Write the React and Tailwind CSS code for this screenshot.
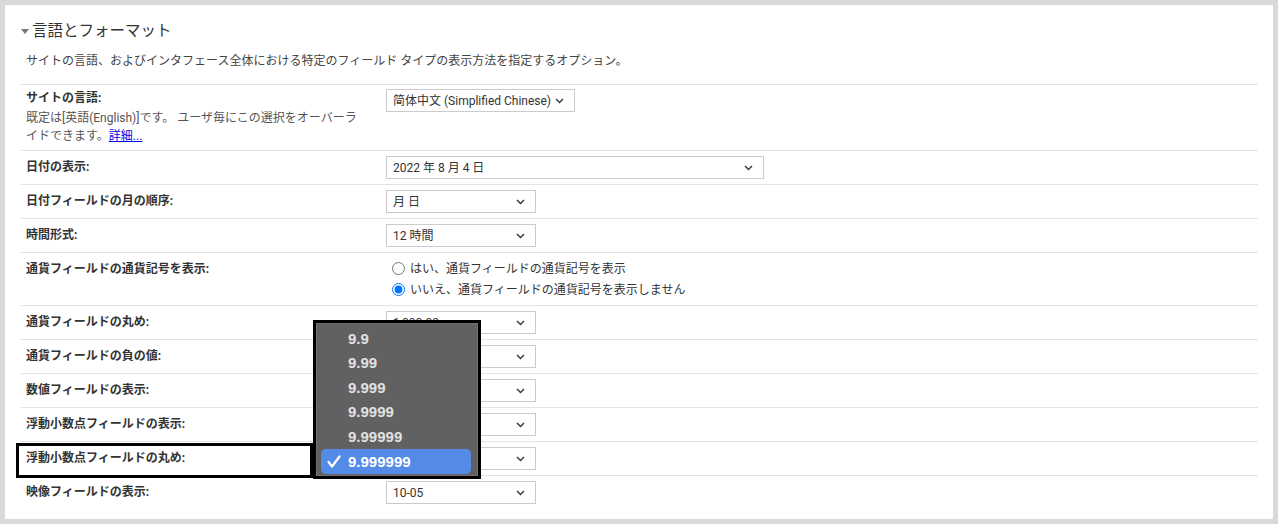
import React from "react";

const Chevron = () => (
  <svg width="9" height="6" viewBox="0 0 9 6" className="shrink-0">
    <path d="M1 1l3.5 3.5L8 1" fill="none" stroke="#3a3a3a" strokeWidth="1.5" />
  </svg>
);

function FakeSelect({ value, width, auto }) {
  return (
    <div
      className={`flex h-[23px] items-center border border-[#cbcbcb] bg-white pl-[6px] pr-[10px] text-[12px] text-[#333] ${
        auto ? "gap-[4px]" : "justify-between"
      }`}
      style={auto ? undefined : { width }}
    >
      <span className="whitespace-nowrap">{value}</span>
      <Chevron />
    </div>
  );
}

function Row({ label, children }) {
  return (
    <div className="flex border-t border-[#e3e3e3] py-[5px] pl-[5px]">
      <div className="w-[360px] shrink-0 text-[12px] font-bold leading-[23px] text-[#333]">{label}</div>
      <div>{children}</div>
    </div>
  );
}

const rows = [
  { label: "日付の表示:", value: "2022 年 8 月 4 日", width: 378 },
  { label: "日付フィールドの月の順序:", value: "月 日", width: 150 },
  { label: "時間形式:", value: "12 時間", width: 150 },
];

const rows2 = [
  { label: "通貨フィールドの丸め:", value: "1,000.00" },
  { label: "通貨フィールドの負の値:", value: "-1,000.00" },
  { label: "数値フィールドの表示:", value: "1,000.00" },
  { label: "浮動小数点フィールドの表示:", value: "1,000.00" },
  { label: "浮動小数点フィールドの丸め:", value: "9.999999" },
  { label: "映像フィールドの表示:", value: "10-05" },
];

const options = ["9.9", "9.99", "9.999", "9.9999", "9.99999", "9.999999"];

export default function App() {
  return (
    <div
      className="relative h-[524px] w-[1278px] overflow-hidden bg-[#d9d9d9] p-[5px] text-[#333]"
      style={{ fontFamily: 'Roboto, "Noto Sans CJK JP", sans-serif' }}
    >
      <div className="h-full bg-white pl-[15px] pr-[15px] pt-[14px]">
        {/* Heading */}
        <div className="flex h-[24px] items-center gap-[3px] pl-[1px]">
          <svg width="8" height="5" viewBox="0 0 8 5" className="mt-[1px]">
            <path d="M0 0h8L4 5z" fill="#777" />
          </svg>
          <h2 className="text-[15.5px] leading-[24px] text-[#333]">言語とフォーマット</h2>
        </div>
        <p className="mt-[9px] pl-[6px] text-[12px] leading-[18px] text-[#444]">
          サイトの言語、およびインタフェース全体における特定のフィールド タイプの表示方法を指定するオプション。
        </p>

        <div className="ml-[1px] mt-[14px]">
          {/* Site language */}
          <div className="flex border-t border-[#e3e3e3] pb-[5px] pl-[5px] pt-[2px]">
            <div className="w-[360px] shrink-0 text-[12px] text-[#333]">
              <div className="font-bold leading-[22px]">サイトの言語:</div>
              <div className="leading-[18px] text-[#555]">
                既定は[英語(English)]です。 ユーザ毎にこの選択をオーバーラ
                <br />
                イドできます。<span className="text-[#0000ee] underline">詳細...</span>
              </div>
            </div>
            <div className="pt-[2px]">
              <FakeSelect value="简体中文 (Simplified Chinese)" auto />
            </div>
          </div>

          {rows.map((r) => (
            <Row key={r.label} label={r.label}>
              <FakeSelect value={r.value} width={r.width} />
            </Row>
          ))}

          {/* Currency symbol */}
          <div className="flex border-t border-[#e3e3e3] py-[5px] pl-[5px]">
            <div className="w-[360px] shrink-0 pt-[2px] text-[12px] font-bold leading-[18px] text-[#333]">
              通貨フィールドの通貨記号を表示:
            </div>
            <div className="pl-[6px] text-[12px] text-[#333]">
              <label className="flex h-[21px] items-center gap-[5px]">
                <input type="radio" name="cur" readOnly className="m-0 h-[13px] w-[13px]" />
                はい、通貨フィールドの通貨記号を表示
              </label>
              <label className="flex h-[21px] items-center gap-[5px]">
                <input type="radio" name="cur" readOnly defaultChecked className="m-0 h-[13px] w-[13px]" />
                いいえ、通貨フィールドの通貨記号を表示しません
              </label>
            </div>
          </div>

          {rows2.map((r) => (
            <Row key={r.label} label={r.label}>
              <FakeSelect value={r.value} width={150} />
            </Row>
          ))}
        </div>
      </div>

      {/* Highlight box on label */}
      <div className="absolute left-[16px] top-[443px] h-[35px] w-[297px] border-[3px] border-black" />

      {/* Open dropdown menu */}
      <div className="absolute left-[313px] top-[320px] h-[159px] w-[168px] border-[3px] border-black bg-[#616161] pt-[3.5px] shadow-[inset_0_0_0_1px_#707070]">
        {options.map((o, i) => {
          const sel = i === options.length - 1;
          return (
            <div
              key={o}
              className={`relative ml-[5px] mr-[7px] flex h-[24.6px] items-center rounded-[5px] pl-[27px] text-[15px] font-bold ${
                sel ? "bg-[#548be8] text-white" : "text-[#e2e2e2]"
              }`}
              style={{ fontFamily: '"Liberation Sans", Arial, sans-serif' }}
            >
              {sel && (
                <svg width="14" height="13" viewBox="0 0 14 13" className="absolute left-[6px] top-[6px]">
                  <path d="M1.5 7l3.5 4.5L12.5 1.5" fill="none" stroke="white" strokeWidth="2.2" strokeLinecap="round" strokeLinejoin="round" />
                </svg>
              )}
              {o}
            </div>
          );
        })}
      </div>
    </div>
  );
}
